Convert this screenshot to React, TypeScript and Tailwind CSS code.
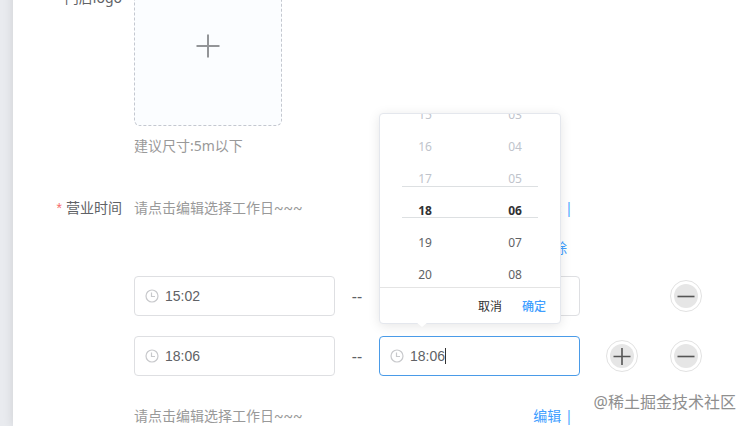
import { ReactNode, useState } from "react";

const HOURS = ["15", "16", "17", "18", "19", "20"];
const MINUTES = ["03", "04", "05", "06", "07", "08"];
const ACTIVE_INDEX = 3;

function ClockSvg() {
  return (
    <svg width="14" height="14" viewBox="0 0 14 14" fill="none" stroke="currentColor" strokeWidth="1.2">
      <circle cx="7" cy="7" r="6" />
      <path d="M6.5 3.4V7.5H10" />
    </svg>
  );
}

function PlusSvg({ size }: { size: number }) {
  return (
    <svg width={size} height={size} viewBox="0 0 24 24" fill="none" stroke="currentColor" strokeWidth="2">
      <path d="M12 0.5V23.5M0.5 12H23.5" />
    </svg>
  );
}

function RoundButton({ kind }: { kind: "plus" | "minus" }) {
  return (
    <button
      type="button"
      aria-label={kind === "plus" ? "添加时间段" : "删除时间段"}
      className="flex h-8 w-8 shrink-0 items-center justify-center rounded-full border border-[#e2e2e2] bg-white"
    >
      <span className="flex h-6 w-6 items-center justify-center rounded-full bg-[#e6e6e6] text-[#555]">
        <svg width="18" height="18" viewBox="0 0 18 18" fill="none" stroke="currentColor" strokeWidth="1.6">
          <path d={kind === "plus" ? "M0.5 9.5H17.5M9 1V18" : "M0.5 9.5H17.5"} />
        </svg>
      </span>
    </button>
  );
}

function TimeInput({
  label,
  initial,
  focused = false,
  children,
}: {
  label: string;
  initial: string;
  focused?: boolean;
  children?: ReactNode;
}) {
  const [value, setValue] = useState(initial);

  return (
    <div className="relative w-[201px] shrink-0">
      <div
        className={`flex h-10 items-center gap-1.5 rounded border bg-white pl-2.5 ${
          focused ? "border-[#4a9be8]" : "border-[#dedfe2]"
        }`}
      >
        <span className="text-[#c8c9cc]">
          <ClockSvg />
        </span>
        <input
          aria-label={label}
          value={value}
          onChange={(e) => setValue(e.target.value)}
          className="w-full min-w-0 bg-transparent pr-3 font-['Liberation_Sans',sans-serif] text-sm text-[#606266] caret-transparent outline-none"
        />
      </div>
      {focused && <span className="absolute top-3 left-[66px] h-4 w-px bg-[#333]" />}
      {children}
    </div>
  );
}

function SpinnerColumn({ items }: { items: string[] }) {
  return (
    <ul className="-mt-[15px] flex-1 text-center text-xs">
      {items.map((item, i) => (
        <li
          key={item}
          className={`h-8 leading-8 ${
            i === ACTIVE_INDEX
              ? "font-bold text-[#303133]"
              : i < ACTIVE_INDEX
                ? "text-[#c0c4cc]"
                : "text-[#606266]"
          }`}
        >
          {item}
        </li>
      ))}
    </ul>
  );
}

function TimePanel() {
  return (
    <div className="absolute bottom-full left-0 z-10 mb-3 w-[182px] rounded-sm border border-[#e4e7ed] bg-white shadow-[0_2px_12px_0_rgba(0,0,0,0.1)]">
      <div className="relative flex h-[173px] overflow-hidden">
        <SpinnerColumn items={HOURS} />
        <SpinnerColumn items={MINUTES} />
        <div className="absolute inset-x-[22px] top-[72px] h-8 border-y border-[#dde0e2]" />
      </div>
      <div className="flex h-9 items-center justify-end gap-5 border-t border-[#e4e4e4] pt-0.5 pr-3.5 text-xs">
        <button type="button" className="text-[#303133]">取消</button>
        <button type="button" className="font-medium text-[#409eff]">确定</button>
      </div>
      <svg className="absolute top-full left-9 text-white" width="12" height="6" viewBox="0 0 12 6">
        <path d="M0 -1H12L6 4Z" fill="currentColor" />
      </svg>
    </div>
  );
}

function WorkdayRow() {
  return (
    <div className="flex w-[446px] justify-between leading-10">
      <p className="font-[Roboto,'Noto_Sans_CJK_SC',sans-serif] text-[#999]">请点击编辑选择工作日~~~</p>
      <div className="w-[54px] text-center text-[#409eff]">
        <a href="#edit">编辑</a> | <a href="#remove">删除</a>
      </div>
    </div>
  );
}

function TimeRow({ start, end, canAdd, picking }: { start: string; end: string; canAdd?: boolean; picking?: boolean }) {
  return (
    <div className="flex items-center">
      <TimeInput label="开始时间" initial={start} />
      <span className="w-11 shrink-0 text-center text-base leading-10 text-[#606266]">--</span>
      <TimeInput label="结束时间" initial={end} focused={picking}>
        {picking && <TimePanel />}
      </TimeInput>
      <div className="ml-[26px] flex w-24 justify-between">
        {canAdd ? <RoundButton kind="plus" /> : <span />}
        <RoundButton kind="minus" />
      </div>
    </div>
  );
}

function FormItem({ label, required, children }: { label: string; required?: boolean; children: ReactNode }) {
  return (
    <div className="flex">
      <div className="w-[121px] shrink-0 pr-3 text-right leading-10 text-[#606266]">
        {required && <span className="mr-1 font-['Liberation_Sans',sans-serif] text-[#f56c6c]">*</span>}
        {label}
      </div>
      <div className="min-w-0 flex-1">{children}</div>
    </div>
  );
}

export default function App() {
  return (
    <div className="relative flex h-screen overflow-hidden bg-[#e9ebef] pl-[13px] font-['Noto_Sans','Noto_Sans_CJK_SC',sans-serif] text-sm">
      {/* the form is scrolled a little, so the first item starts above the fold */}
      <main className="-mt-[22px] flex flex-1 flex-col gap-[22px] bg-white shadow-[0_0_10px_rgba(0,0,0,0.12)]">
        <FormItem label="门店logo">
          <button
            type="button"
            aria-label="上传logo"
            className="flex h-[148px] w-[148px] items-center justify-center rounded-md border border-dashed border-[#c4c8d0] bg-[#fbfdff] pb-3 text-[#939598]"
          >
            <PlusSvg size={24} />
          </button>
          <p className="leading-10 text-[#999]">建议尺寸:5m以下</p>
        </FormItem>

        <FormItem label="营业时间" required>
          <WorkdayRow />
          <div className="mt-2 mb-5 flex flex-col gap-5">
            <TimeRow start="15:02" end="" />
            <TimeRow start="18:06" end="18:06" canAdd picking />
          </div>
          <WorkdayRow />
        </FormItem>
      </main>

      <span className="absolute right-[14px] bottom-3 text-base leading-6 text-[#8f8f8f]">@稀土掘金技术社区</span>
    </div>
  );
}
